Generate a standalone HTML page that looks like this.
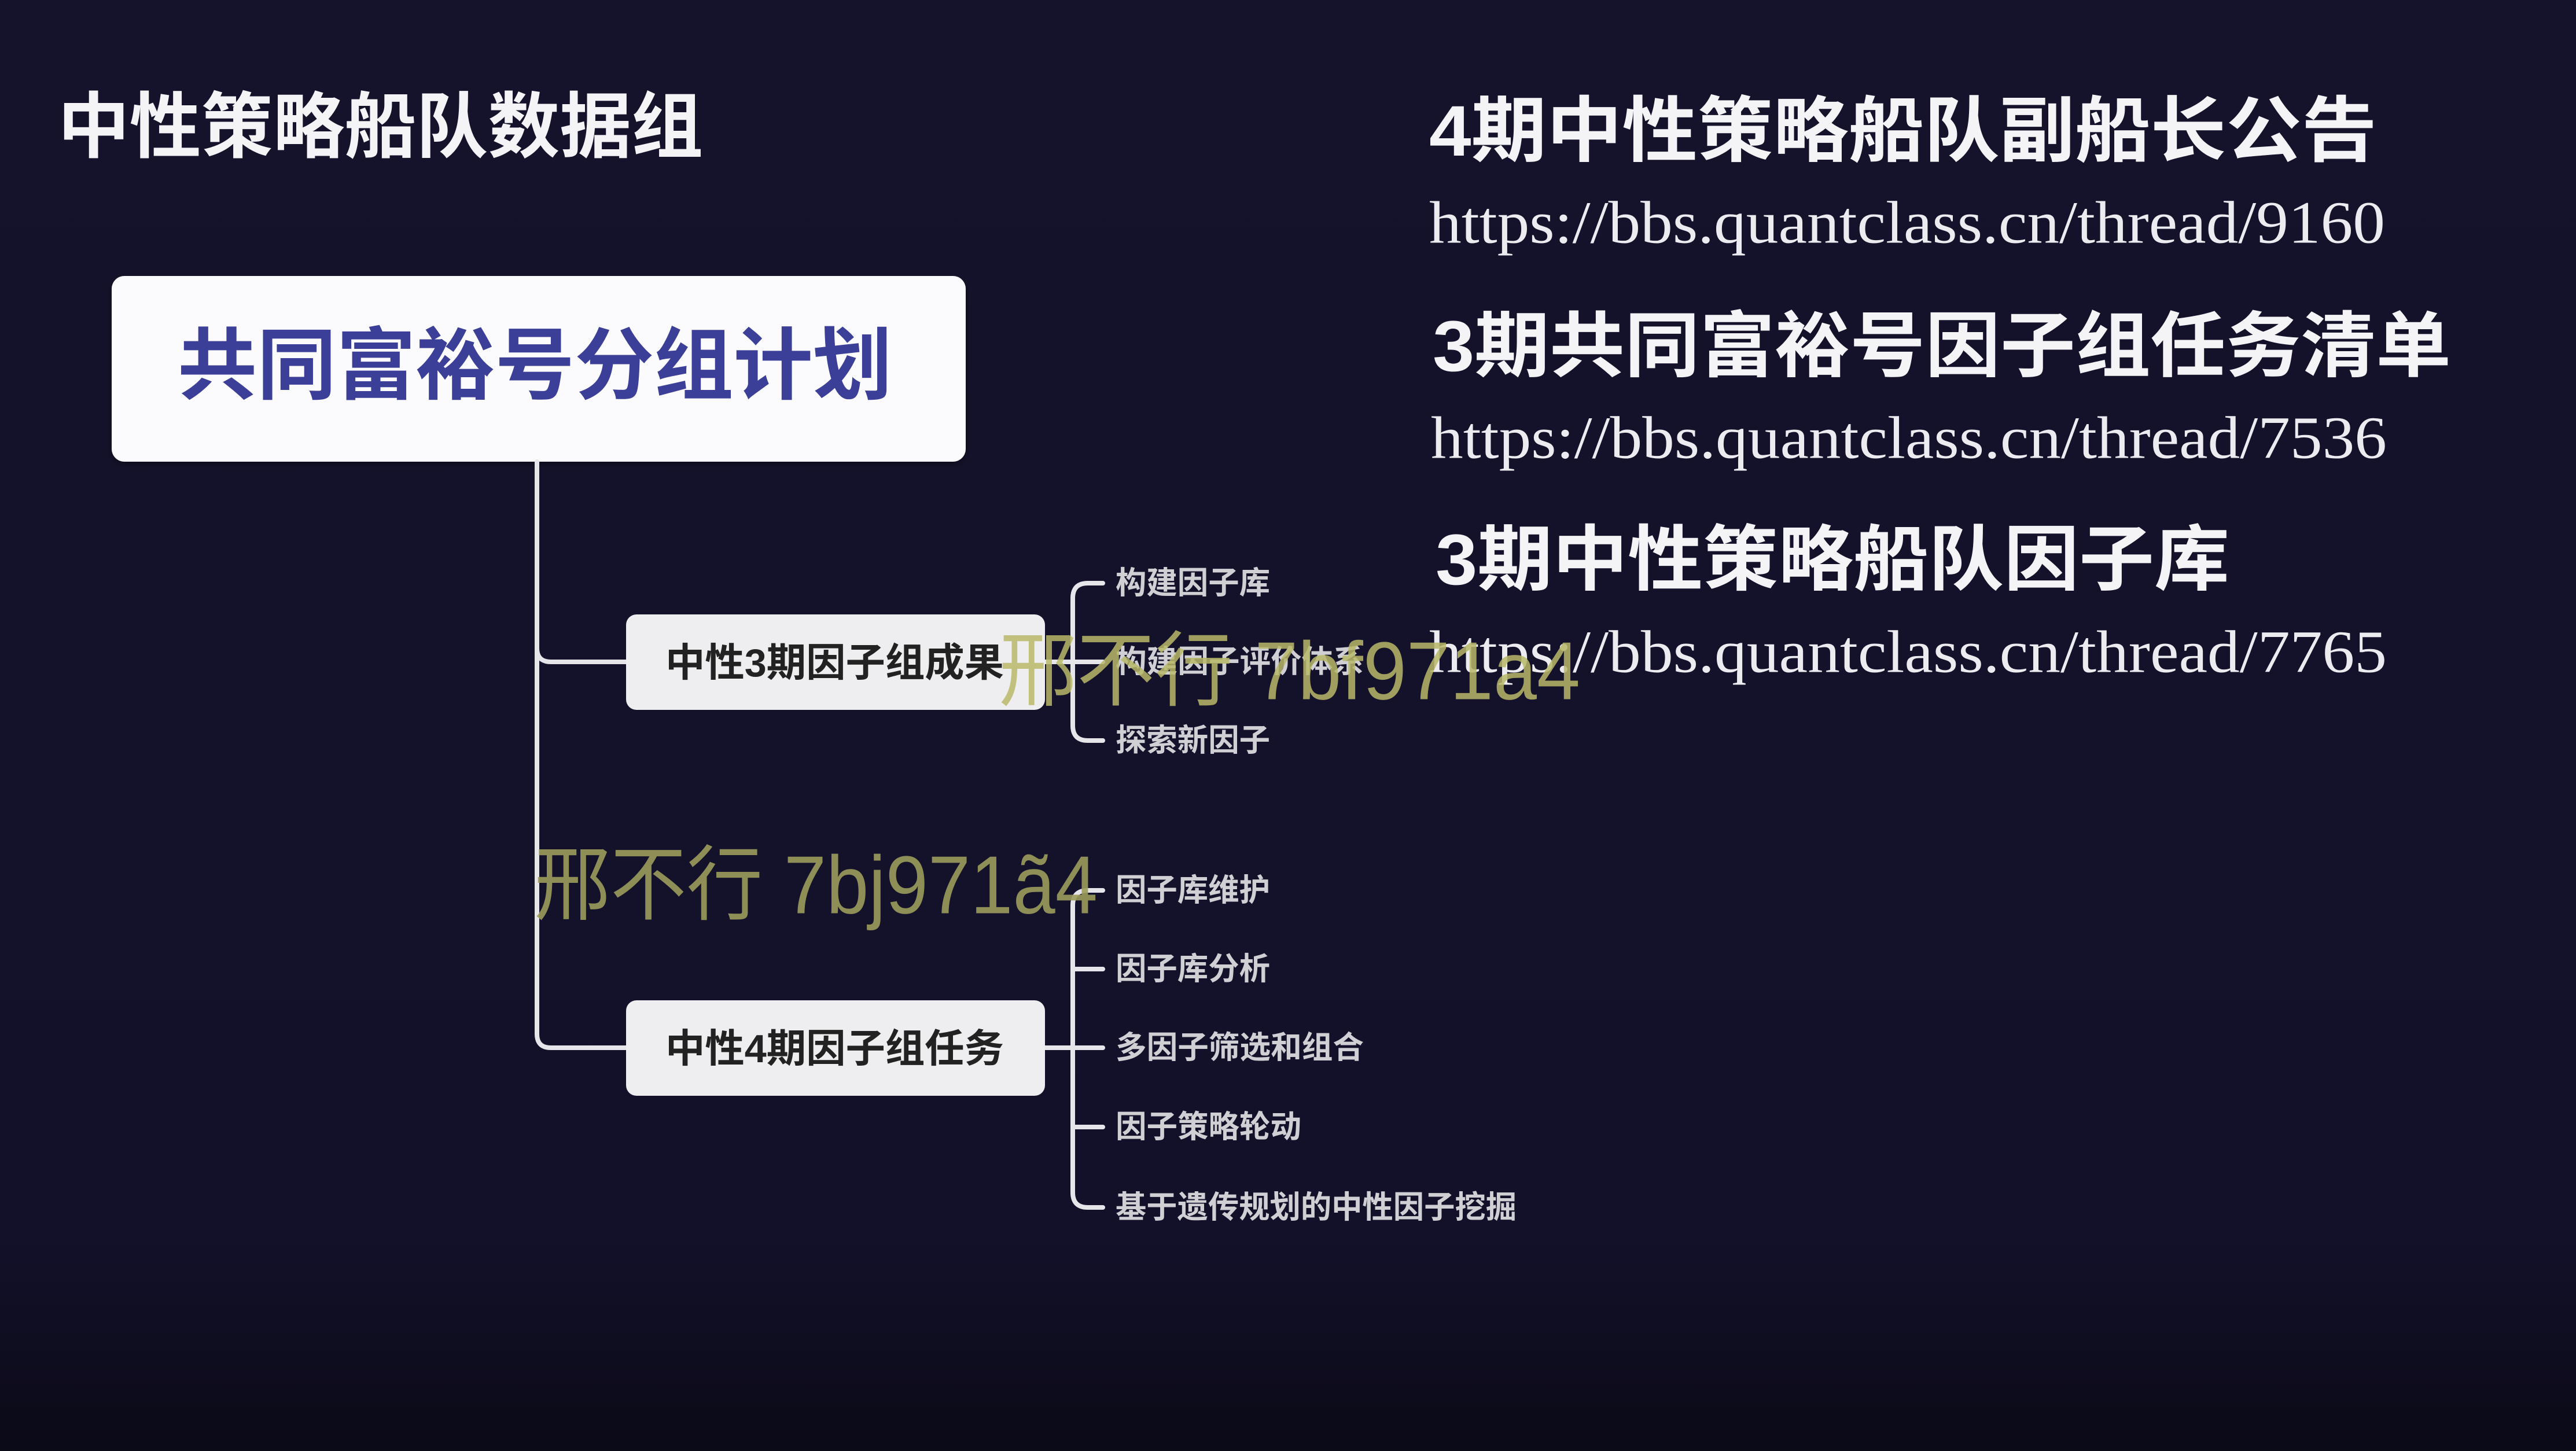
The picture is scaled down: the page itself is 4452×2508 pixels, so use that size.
<!DOCTYPE html>
<html><head><meta charset="utf-8"><style>
html,body{margin:0;padding:0;background:#14122a;}
svg{display:block}
text{font-family:"Liberation Sans","Noto Sans CJK SC",sans-serif;}
.u{font-family:"Liberation Serif","Noto Serif CJK SC",serif;fill:#ececf0;}
</style></head><body>
<svg width="4452" height="2508" viewBox="0 0 4452 2508" xmlns="http://www.w3.org/2000/svg">
<defs>
<linearGradient id="bg" x1="0" y1="0" x2="0" y2="1">
<stop offset="0" stop-color="#15132b"/>
<stop offset="0.85" stop-color="#13112a"/>
<stop offset="1" stop-color="#0b0a17"/>
</linearGradient>
<filter id="sh"><feDropShadow dx="0" dy="4" stdDeviation="6" flood-color="#000" flood-opacity="0.4"/></filter>
</defs>
<rect width="4452" height="2508" fill="url(#bg)"/>

<text x="100" y="220" font-size="124" font-weight="bold" fill="#f4f4f6" dominant-baseline="central" textLength="1115" lengthAdjust="spacingAndGlyphs">中性策略船队数据组</text>

<rect x="193" y="477" width="1476" height="321" rx="22" fill="#fbfbfd" filter="url(#sh)"/>
<text x="307" y="632" font-size="136" font-weight="bold" fill="#3c3f98" dominant-baseline="central" textLength="1235" lengthAdjust="spacingAndGlyphs">共同富裕号分组计划</text>

<g fill="none" stroke="#e6e6ea" stroke-width="8" stroke-linecap="round">
<path d="M928 798 V1120 Q928 1144 952 1144 H1082"/>
<path d="M928 1120 V1787 Q928 1811 952 1811 H1082"/>
<path d="M1906 1008 H1880 Q1854 1008 1854 1034 V1254 Q1854 1280 1880 1280 H1906"/>
<path d="M1806 1144 H1906"/>
<path d="M1906 1539 H1880 Q1854 1539 1854 1565 V2061 Q1854 2087 1880 2087 H1906"/>
<path d="M1854 1675 H1906 M1806 1811 H1906 M1854 1948 H1906"/>
</g>

<rect x="1082" y="1062" width="724" height="165" rx="18" fill="#eeeef0"/>
<text x="1150" y="1146" font-size="68" font-weight="bold" fill="#222" dominant-baseline="central" textLength="585" lengthAdjust="spacingAndGlyphs">中性3期因子组成果</text>
<rect x="1082" y="1729" width="724" height="165" rx="18" fill="#eeeef0"/>
<text x="1150" y="1813" font-size="68" font-weight="bold" fill="#222" dominant-baseline="central" textLength="585" lengthAdjust="spacingAndGlyphs">中性4期因子组任务</text>

<g font-size="54" font-weight="bold" fill="#cfcfd4" dominant-baseline="central">
<text x="1928" y="1008" textLength="267" lengthAdjust="spacingAndGlyphs">构建因子库</text>
<text x="1928" y="1144" textLength="429" lengthAdjust="spacingAndGlyphs">构建因子评价体系</text>
<text x="1928" y="1280" textLength="267" lengthAdjust="spacingAndGlyphs">探索新因子</text>
<text x="1928" y="1539" textLength="267" lengthAdjust="spacingAndGlyphs">因子库维护</text>
<text x="1928" y="1675" textLength="267" lengthAdjust="spacingAndGlyphs">因子库分析</text>
<text x="1928" y="1811" textLength="429" lengthAdjust="spacingAndGlyphs">多因子筛选和组合</text>
<text x="1928" y="1948" textLength="321" lengthAdjust="spacingAndGlyphs">因子策略轮动</text>
<text x="1928" y="2087" textLength="693" lengthAdjust="spacingAndGlyphs">基于遗传规划的中性因子挖掘</text>
</g>

<g font-size="124" font-weight="bold" fill="#f4f4f6" dominant-baseline="central">
<text x="2470" y="227" textLength="1638" lengthAdjust="spacingAndGlyphs">4期中性策略船队副船长公告</text>
<text x="2476" y="599" textLength="1760" lengthAdjust="spacingAndGlyphs">3期共同富裕号因子组任务清单</text>
<text x="2481" y="968" textLength="1372" lengthAdjust="spacingAndGlyphs">3期中性策略船队因子库</text>
</g>
<g font-size="104" dominant-baseline="central">
<text class="u" x="2470" y="385" textLength="1652" lengthAdjust="spacingAndGlyphs">https://bbs.quantclass.cn/thread/9160</text>
<text class="u" x="2473" y="757" textLength="1652" lengthAdjust="spacingAndGlyphs">https://bbs.quantclass.cn/thread/7536</text>
<text class="u" x="2470" y="1127" textLength="1655" lengthAdjust="spacingAndGlyphs">https://bbs.quantclass.cn/thread/7765</text>
</g>

<text x="1726" y="1160" font-size="142" fill="#b8b868" fill-opacity="0.85" dominant-baseline="central" textLength="1005" lengthAdjust="spacingAndGlyphs">邢不行 7bf971a4</text>
<text x="923" y="1530" font-size="142" fill="#9c9c5c" fill-opacity="0.9" dominant-baseline="central" textLength="974" lengthAdjust="spacingAndGlyphs">邢不行 7bj971ã4</text>
</svg>
</body></html>
